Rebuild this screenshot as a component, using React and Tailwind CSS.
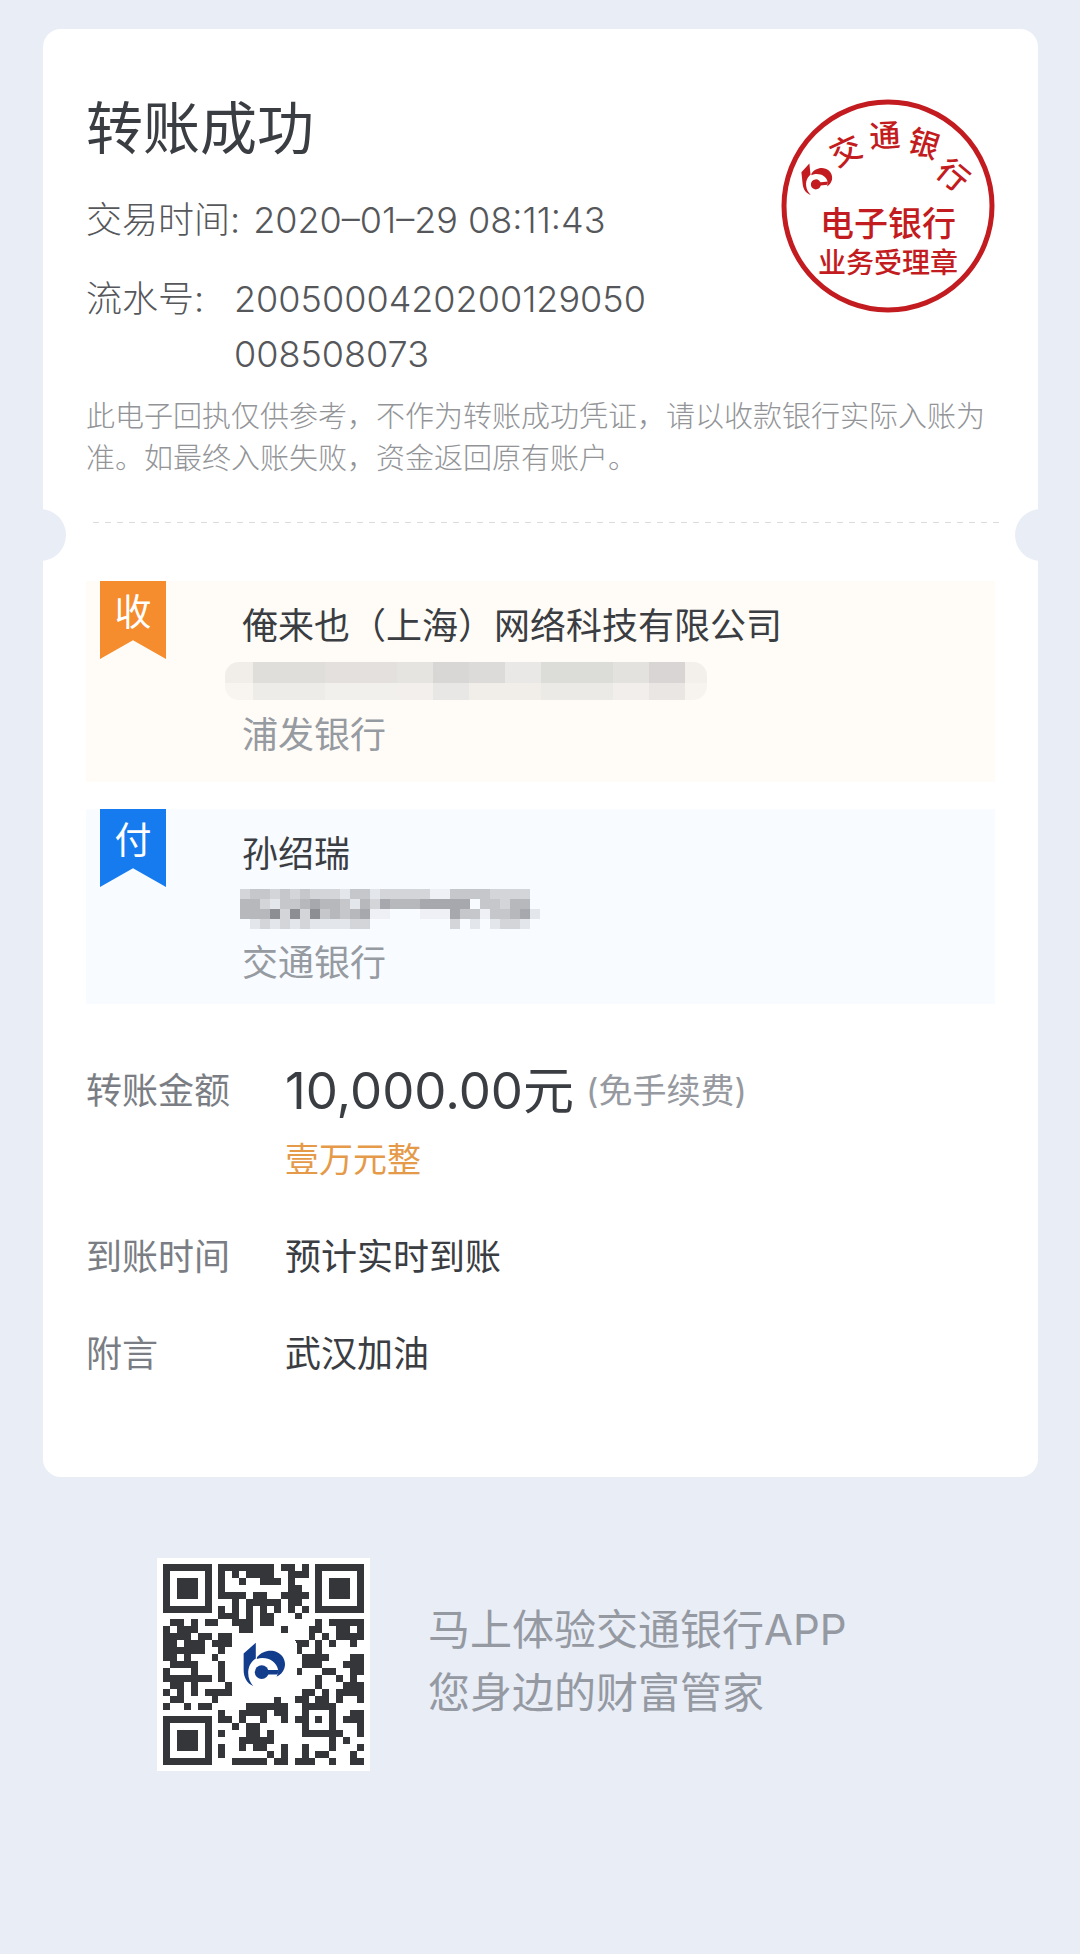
import React from "react";

const QR_ROWS = [
  "1111111.11111111.11.1.1111111",
  "1.....1.1.1.1111..111.1.....1",
  "1.111.1.1..1..111.1...1.111.1",
  "1.111.1.1.........11..1.111.1",
  "1.111.1.1111.11..1111.1.111.1",
  "1.....1...1.11111.11..1.....1",
  "1111111.1.1.1.1.1.1.1.1111111",
  "........111.1.11...1.........",
  ".11.1.11..111.11......1.11111",
  "1.111......11....1...11..11.1",
  "1111.11.11...........1.1.1111",
  "11.111.111.........11.1.1..1.",
  "111111..1..........1..1......",
  "11.1...1............1111...11",
  ".1111...1...........111...111",
  "1...1...1..........1...11..11",
  "1111111.1.............1..1.1.",
  ".11.1....1............1...111",
  "1.1.1.1111..........11.1.1111",
  ".11....1........1..11.11.1..1",
  "1..1.11.....111111..11111....",
  "........1..1111.11..1...1..11",
  "1111111.11.1..1..1.11.1.1.111",
  "1.....1...1.11......1...1...1",
  "1.111.1.1...11.1....111111..1",
  "1.111.1....11111........1.1..",
  "1.111.1.1..1.11..1..1...1...1",
  "1.....1.1......1.1..1.11...1.",
  "1111111...11111.11.111..1..11",
];

const SHADES = {
  ".": "bg-transparent",
  a: "bg-[#eef0f5]",
  b: "bg-[#e3e6ea]",
  c: "bg-[#d3d5d9]",
  d: "bg-[#c5c7cb]",
  e: "bg-[#b6b8bc]",
  f: "bg-[#a6a8ad]",
  g: "bg-[#8c8e93]",
};

const PAYER_MASK = [
  "cddcdcdcccbddbcccccaaddddcccc.",
  "eecbddefeedbecfeeefffff.ddcee.",
  "eeegcgcgdedefaa...aaafddaddefb",
  ".bcbcbcbbbbcc........c.b.bccb.",
];

function BankLogo(props) {
  return (
    <svg viewBox="0 0 134 136" fill="currentColor" aria-hidden="true" {...props}>
      <path d="M5 35 42 2v48C27 60 18 76 19 96c0 14 6 28 15 38C15 126 5 107 5 86Z" />
      <path d="M46 46C60 28 86 21 107 31c20 9 28 31 22 49-4 12-13 21-24 26 4-8 6-15 5-21C106 63 86 49 62 49c-6 0-11 1-17 3Z" />
      <circle cx="60" cy="92" r="21" />
      <path d="M60 85h52l-4 14H60Z" />
    </svg>
  );
}

function Stamp() {
  return (
    <svg
      viewBox="0 0 214 214"
      className="absolute top-[70px] right-[43px] w-[214px] text-[#c31c20]"
      fill="currentColor"
      fontFamily="'Liberation Sans', 'Noto Sans CJK SC', sans-serif"
      fontWeight="500"
      textAnchor="middle"
    >
      <circle cx="107" cy="107" r="104" fill="none" stroke="currentColor" strokeWidth="5" />
      <BankLogo x="20" y="63" width="32" height="33" transform="rotate(-6 36 80)" />
      <g fontSize="31">
        <text transform="translate(65 52) rotate(-25)" y="11">交</text>
        <text transform="translate(104 37) rotate(-3)" y="11">通</text>
        <text transform="translate(143 45) rotate(18)" y="11">银</text>
        <text transform="translate(172 76) rotate(40)" y="11">行</text>
      </g>
      <text x="107" y="137" fontSize="34">电子银行</text>
      <text x="107" y="174" fontSize="28">业务受理章</text>
    </svg>
  );
}

function Flag({ children, className }) {
  return (
    <div
      className={`h-[78px] w-[66px] shrink-0 text-center text-[37px] leading-[64px] font-normal text-white [clip-path:polygon(0_0,100%_0,100%_100%,50%_76%,0_100%)] ${className}`}
    >
      {children}
    </div>
  );
}

function PayeeMask() {
  return (
    <div className="-ml-[17px] flex h-[38px] overflow-hidden rounded-[14px]">
      <div className="w-7 bg-linear-to-b from-[#f1eeea] from-55% to-[#f8f5f0] to-55%" />
      <div className="w-[72px] bg-linear-to-b from-[#e0dedb] from-55% to-[#eeece9] to-55%" />
      <div className="w-[72px] bg-linear-to-b from-[#e3e0dd] from-55% to-[#f2f0ec] to-55%" />
      <div className="w-9 bg-linear-to-b from-[#e6e4e1] from-55% to-[#f2efec] to-55%" />
      <div className="w-9 bg-linear-to-b from-[#d9d7d6] from-55% to-[#e8e7e5] to-55%" />
      <div className="w-9 bg-linear-to-b from-[#dddbd9] from-55% to-[#f1eeea] to-55%" />
      <div className="w-9 bg-linear-to-b from-[#eae8e6] from-55% to-[#f1eeea] to-55%" />
      <div className="w-[72px] bg-linear-to-b from-[#dcdcd9] from-55% to-[#ebeae7] to-55%" />
      <div className="w-9 bg-linear-to-b from-[#e4e2df] from-55% to-[#f1eeeb] to-55%" />
      <div className="w-9 bg-linear-to-b from-[#d9d5d4] from-55% to-[#e9e6e4] to-55%" />
      <div className="w-[22px] bg-linear-to-b from-[#f3f0ec] from-55% to-[#f7f4f0] to-55%" />
    </div>
  );
}

function PayerMask() {
  return (
    <div className="-ml-0.5">
      {PAYER_MASK.map((row, r) => (
        <div key={r} className="flex">
          {row.split("").map((shade, c) => (
            <div key={c} className={`size-2.5 ${SHADES[shade]}`} />
          ))}
        </div>
      ))}
    </div>
  );
}

function Party({ flag, flagClass, panelClass, name, mask, bank }) {
  return (
    <section className={`flex pl-[14px] ${panelClass}`}>
      <Flag className={flagClass}>{flag}</Flag>
      <div className="ml-[76px] text-[36px] leading-[54px]">
        <h2 className="text-[#3a3d42]">{name}</h2>
        <div className="flex h-[55px] items-center">{mask}</div>
        <p className="text-[#969aa1]">{bank}</p>
      </div>
    </section>
  );
}

function QrCode() {
  return (
    <div className="relative w-[213px] shrink-0 bg-white p-[6px]">
      <svg viewBox="0 0 29 29" className="block w-full text-[#35363a]" fill="currentColor" shapeRendering="crispEdges" role="img" aria-label="交通银行APP">
        {QR_ROWS.map((row, y) =>
          row.split("").map((m, x) => (m === "1" ? <rect key={`${x}-${y}`} x={x} y={y} width="1" height="1" /> : null))
        )}
        <rect x="10" y="10" width="9.4" height="9.2" rx="2.2" fill="#fff" />
      </svg>
      <BankLogo className="absolute top-[84px] left-[85px] w-[44px] text-[#123c8c]" />
    </div>
  );
}

export default function App() {
  return (
    <main className="min-h-screen bg-[#e8edf6] pr-[42px] pl-[43px] pt-[29px] pb-16 font-['Inter','Noto_Sans_CJK_SC',sans-serif] font-normal">
      <article className="relative rounded-[18px] bg-white px-[43px] pt-16 pb-24">
        <Stamp />
        <h1 className="text-[57px] leading-[72px] text-[#3a3d42]">转账成功</h1>
        <dl className="mt-[28px] text-[36px] leading-[55px] font-light text-[#55575a]">
          <div className="flex">
            <dt>交易时间:</dt>
            <dd className="ml-[13px]">2020–01–29 08:11:43</dd>
          </div>
          <div className="mt-6 flex">
            <dt className="w-[148px]">流水号:</dt>
            <dd>
              2005000420200129050
              <br />
              008508073
            </dd>
          </div>
        </dl>
        <p className="mt-[14px] -mr-2 text-[29px] leading-[42px] font-light text-[#929497]">
          此电子回执仅供参考，不作为转账成功凭证，请以收款银行实际入账为准。如最终入账失败，资金返回原有账户。
        </p>

        <div className="-mx-[43px] mt-[42px] h-[59px] pr-[34px] pl-[50px]">
          <div className="h-px bg-[repeating-linear-gradient(90deg,#dcdcdc_0_6px,transparent_6px_12px)]" />
        </div>
        <div className="absolute top-[480px] -left-[29px] size-[52px] rounded-full bg-[#e8edf6]" />
        <div className="absolute top-[480px] -right-[29px] size-[52px] rounded-full bg-[#e8edf6]" />

        <Party
          flag="收"
          flagClass="-mt-[18px] bg-[#f58c2e]"
          panelClass="bg-[#fffcf7] pt-[18px] pb-5"
          name="俺来也（上海）网络科技有限公司"
          mask={<PayeeMask />}
          bank="浦发银行"
        />
        <div className="h-[27px]" />
        <Party
          flag="付"
          flagClass="-mt-[18px] bg-[#177bf0]"
          panelClass="bg-[#f8fbff] pt-[18px] pb-[14px]"
          name="孙绍瑞"
          mask={<PayerMask />}
          bank="交通银行"
        />

        <dl className="mt-[51px] grid grid-cols-[199px_1fr] text-[36px] leading-[54px] text-[#3a3d42]">
          <dt className="leading-[72px] text-[#7a7e84]">转账金额</dt>
          <dd>
            <div className="flex items-center leading-[72px]">
              <span className="text-[51px]">10,000.00元</span>
              <span className="ml-3 text-[34px] text-[#96999f]">(免手续费)</span>
            </div>
            <div className="mt-2 text-[34px] leading-[50px] text-[#e59a49]">壹万元整</div>
          </dd>
          <dt className="mt-[45px] text-[#7a7e84]">到账时间</dt>
          <dd className="mt-[45px]">预计实时到账</dd>
          <dt className="mt-[43px] text-[#7a7e84]">附言</dt>
          <dd className="mt-[43px]">武汉加油</dd>
        </dl>
      </article>

      <footer className="mt-[81px] flex items-center gap-[58px] pl-[114px]">
        <QrCode />
        <p className="pb-2 text-[42px] leading-[63px] text-[#9599a2]">
          马上体验交通银行APP
          <br />
          您身边的财富管家
        </p>
      </footer>
    </main>
  );
}
